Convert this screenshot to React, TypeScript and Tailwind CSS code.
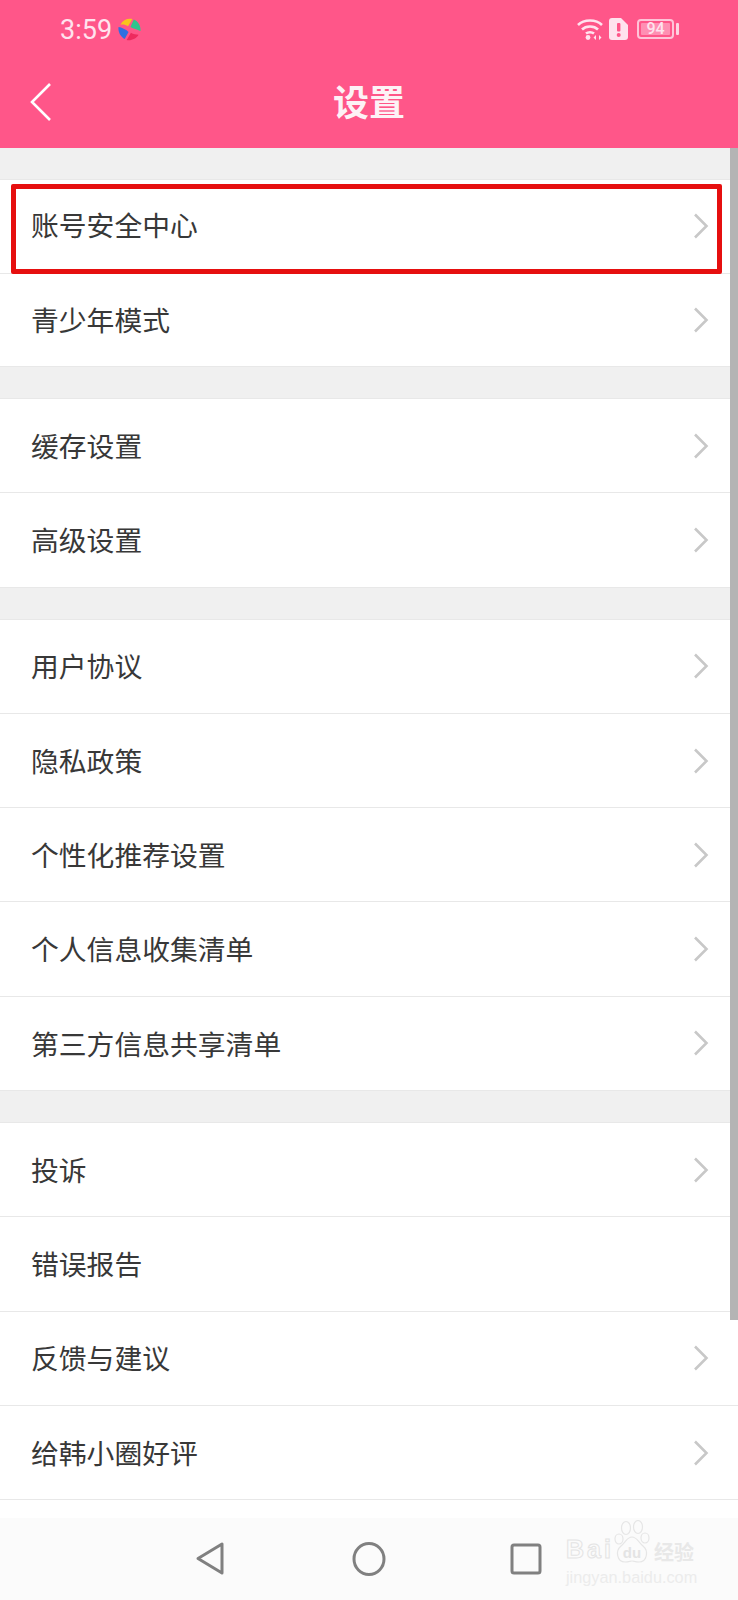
const groups: { label: string; arrow?: boolean; highlight?: boolean }[][] = [
  [{ label: "账号安全中心", highlight: true }, { label: "青少年模式" }],
  [{ label: "缓存设置" }, { label: "高级设置" }],
  [
    { label: "用户协议" },
    { label: "隐私政策" },
    { label: "个性化推荐设置" },
    { label: "个人信息收集清单" },
    { label: "第三方信息共享清单" },
  ],
  [
    { label: "投诉" },
    { label: "错误报告", arrow: false },
    { label: "反馈与建议" },
    { label: "给韩小圈好评" },
  ],
];

function Chevron() {
  return (
    <svg width="16" height="26" viewBox="0 0 16 26" fill="none" className="shrink-0">
      <path d="M2 1.5 L13.5 13 L2 24.5" stroke="#c8c8c8" strokeWidth="2.6" />
    </svg>
  );
}

function StatusBar() {
  return (
    <div className="flex h-[58px] items-center justify-between pl-[60px] pr-[59px] text-[#ffe3ee]">
      <div className="flex items-center gap-[6px]">
        <span className="translate-y-[1px] font-['Roboto',sans-serif] text-[27px] leading-none">3:59</span>
        <svg width="23" height="23" viewBox="0 0 24 24">
          <path d="M2.5 7 C5 2 10 0 15 1 L10.5 8.5 C8 7 5 6.5 2.5 7 Z" fill="#f8c51c" />
          <path d="M16.5 1.5 C21 3.5 24 8 23.5 13.5 C20 12 16 11.5 13 9.5 Z" fill="#2fc48d" />
          <path d="M21.5 17.5 C19 21.5 14 24 9 23 L13.5 15.5 C16 17 19 17.5 21.5 17.5 Z" fill="#ee2a5e" />
          <path d="M7 22 C3 20 0 15.5 0.5 9.5 C4 10 8 12 11 14.5 Z" fill="#2f6fe0" />
        </svg>
      </div>
      <div className="flex items-center gap-[6px]">
        <svg width="26" height="22" viewBox="0 0 26 22" fill="none" stroke="#ffe3ee" strokeWidth="2.6">
          <path d="M1 7 C7 1 19 1 25 7" />
          <path d="M5 11.5 C9 7.5 17 7.5 21 11.5" />
          <path d="M9 15.5 C11 13.8 15 13.8 17 15.5" />
          <circle cx="11" cy="19.5" r="2.4" fill="#ffe3ee" stroke="none" />
          <path d="M19 17 l-2.5 2.5 l2.5 2.5 Z M22 17 l2.5 2.5 l-2.5 2.5 Z" fill="#ffe3ee" stroke="none" />
        </svg>
        <svg width="19" height="22" viewBox="0 0 19 22">
          <path d="M3 0 H12 L19 7 V19 A3 3 0 0 1 16 22 H3 A3 3 0 0 1 0 19 V3 A3 3 0 0 1 3 0 Z" fill="#ffe3ee" />
          <rect x="8" y="5" width="3.4" height="8.5" rx="1" fill="#ff5689" />
          <circle cx="9.7" cy="17" r="2" fill="#ff5689" />
        </svg>
        <div className="ml-[3px] flex items-center gap-[2px]">
          <div className="flex h-[20px] w-[37px] items-center rounded-[4px] border-2 border-[#ffc4d8] p-[2px]">
            <div className="flex h-full w-full items-center justify-center rounded-[1px] bg-[#ff8fb3] font-['Roboto',sans-serif] text-[16px] font-medium leading-none">
              94
            </div>
          </div>
          <div className="h-[12px] w-[3px] rounded-[1px] bg-[#ffd3e1]" />
        </div>
      </div>
    </div>
  );
}

function Header() {
  return (
    <div className="bg-[#ff5689]">
      <StatusBar />
      <div className="relative flex h-[90px] items-center justify-center">
        <svg width="24" height="40" viewBox="0 0 24 40" fill="none" className="absolute left-[29px] top-[24px]">
          <path d="M21 2 L3 20 L21 38" stroke="#fff" strokeWidth="2.6" />
        </svg>
        <h1 className="-translate-y-[3px] text-[36px] font-bold leading-none text-[#fdf2f6]">设置</h1>
      </div>
    </div>
  );
}

function Row({ label, arrow = true, highlight }: { label: string; arrow?: boolean; highlight?: boolean }) {
  return (
    <div className="relative flex h-[94.3px] items-center justify-between border-b border-[#e8e8e8] pl-[31px] pr-[29px]">
      <span className={`text-[27.8px] leading-none text-[#383838] ${highlight ? "-translate-y-[1px]" : ""}`}>
        {label}
      </span>
      {arrow && <Chevron />}
      {highlight && (
        <div className="absolute left-[11px] right-[16px] top-[4px] -bottom-[1px] rounded-[2px] border-[5px] border-[#e60f0f]" />
      )}
    </div>
  );
}

function NavBar() {
  return (
    <div className="relative flex h-[82px] items-center bg-[#fbfbfb]">
      <svg width="30" height="36" viewBox="0 0 30 36" fill="none" className="ml-[195px] shrink-0">
        <path d="M27 3 V32 L3 17.5 Z" stroke="#808080" strokeWidth="3" strokeLinejoin="round" />
      </svg>
      <svg width="34" height="36" viewBox="0 0 34 36" fill="none" className="ml-[127px] shrink-0">
        <ellipse cx="17" cy="18" rx="15" ry="15.5" stroke="#808080" strokeWidth="3" />
      </svg>
      <svg width="32" height="32" viewBox="0 0 32 32" fill="none" className="ml-[124px] shrink-0">
        <rect x="2" y="2" width="28" height="28" rx="2" stroke="#808080" strokeWidth="3" />
      </svg>
      <Watermark />
    </div>
  );
}

function Watermark() {
  return (
    <div className="absolute left-[566px] top-[2px] w-[132px] font-['Liberation_Sans',sans-serif]">
      <div className="flex items-end">
        <span className="mb-[2px] text-[25px] font-bold leading-none tracking-[3px] text-transparent [-webkit-text-stroke:1px_#e4e4e4]">
          Bai
        </span>
        <div className="relative h-[44px] w-[36px] shrink-0">
          <svg width="36" height="44" viewBox="0 0 36 44" fill="none" stroke="#e6e6e6" strokeWidth="1.2">
            <ellipse cx="5" cy="19" rx="4" ry="5" />
            <ellipse cx="12" cy="8" rx="4.5" ry="6.5" />
            <ellipse cx="24" cy="7" rx="4.5" ry="6.5" />
            <ellipse cx="31" cy="18" rx="4" ry="5" />
            <path d="M18 17 C23 17 24 22 29 26 C35 31 33 42 25 42 C21 42 20 41 18 41 C16 41 15 42 11 42 C3 42 1 31 7 26 C12 22 13 17 18 17 Z" />
          </svg>
          <span className="absolute inset-x-0 top-[25px] text-center text-[15px] font-bold leading-none text-[#e4e4e4]">du</span>
        </div>
        <span className="mb-[2px] ml-[4px] font-['Noto_Sans_CJK_SC',sans-serif] text-[20px] font-bold leading-none text-[#e8e8e8]">
          经验
        </span>
      </div>
      <div className="mt-[5px] whitespace-nowrap text-[16.3px] leading-none text-[#ececec]">jingyan.baidu.com</div>
    </div>
  );
}

export default function App() {
  return (
    <div className="relative flex h-[1600px] w-[738px] flex-col overflow-hidden bg-[#f0f0f0] font-['Noto_Sans_CJK_SC','Noto_Sans',sans-serif]">
      <Header />
      <div className="flex flex-1 flex-col gap-[32px] pt-[32px]">
        {groups.map((rows, i) => (
          <div
            key={i}
            className={`bg-white shadow-[0_-1px_0_#e8e8e8] ${i === 0 ? "[&>div]:h-[93.5px]" : ""}`}
          >
            {rows.map((row) => (
              <Row key={row.label} {...row} />
            ))}
          </div>
        ))}
        <div className="-mt-[32px] flex-1 bg-white" />
      </div>
      <NavBar />
      <div className="absolute right-0 top-[148px] h-[1172px] w-[8px] bg-[#b4b4b4]" />
    </div>
  );
}
